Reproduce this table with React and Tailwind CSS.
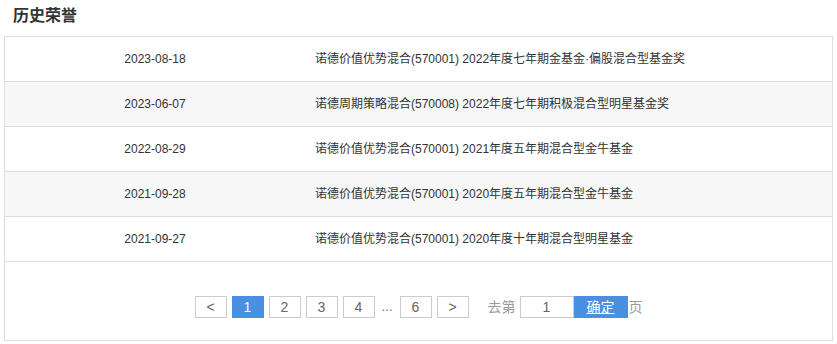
const HONORS = [
  { date: '2023-08-18', name: '诺德价值优势混合(570001) 2022年度七年期金基金·偏股混合型基金奖' },
  { date: '2023-06-07', name: '诺德周期策略混合(570008) 2022年度七年期积极混合型明星基金奖' },
  { date: '2022-08-29', name: '诺德价值优势混合(570001) 2021年度五年期混合型金牛基金' },
  { date: '2021-09-28', name: '诺德价值优势混合(570001) 2020年度五年期混合型金牛基金' },
  { date: '2021-09-27', name: '诺德价值优势混合(570001) 2020年度十年期混合型明星基金' },
];

const PAGES = ['1', '2', '3', '4', '…', '6'];

function PageBox({ children, active }) {
  return (
    <span
      className={`flex h-[22px] w-8 items-center justify-center border text-[14px] ${
        active ? 'border-[#4a90e2] bg-[#4a90e2] text-white' : 'border-[#ccc] bg-white text-[#666]'
      }`}
    >
      {children}
    </span>
  );
}

export default function App() {
  return (
    <div
      className="w-[837px] bg-white text-[#333]"
      style={{ fontFamily: '"Liberation Sans", "Noto Sans CJK SC", sans-serif' }}
    >
      <h2 className="mb-1 h-8 pl-[13px] text-[16px] font-bold leading-8 text-[#333]">历史荣誉</h2>

      <div className="mx-1 border border-[#ddd]">
        {HONORS.map((h, i) => (
          <div
            key={h.date}
            className={`flex h-[45px] items-center border-b border-[#ddd] text-[12px] ${
              i % 2 === 1 ? 'bg-[#f7f7f7]' : 'bg-white'
            }`}
          >
            <div className="w-[300px] text-center">{h.date}</div>
            <div className="pl-[10px]">{h.name}</div>
          </div>
        ))}

        <div className="flex items-center justify-center pb-[22px] pt-[34px]">
          <div className="flex items-center gap-[5px]">
            <PageBox>&lt;</PageBox>
            {PAGES.map((p) =>
              p === '…' ? (
                <span key={p} className="w-[15px] text-center text-[12px] text-[#666]">…</span>
              ) : (
                <PageBox key={p} active={p === '1'}>{p}</PageBox>
              )
            )}
            <PageBox>&gt;</PageBox>
          </div>
          <span className="ml-[19px] text-[14px] text-[#999]">去第</span>
          <span className="ml-1 flex h-[22px] w-[54px] items-center justify-center border border-[#ccc] text-[14px] text-[#666]">
            1
          </span>
          <button className="flex h-[22px] w-[54px] items-center justify-center bg-[#4a90e2] text-[14px] text-white underline">
            确定
          </button>
          <span className="ml-[1px] text-[14px] text-[#999]">页</span>
        </div>
      </div>
    </div>
  );
}
